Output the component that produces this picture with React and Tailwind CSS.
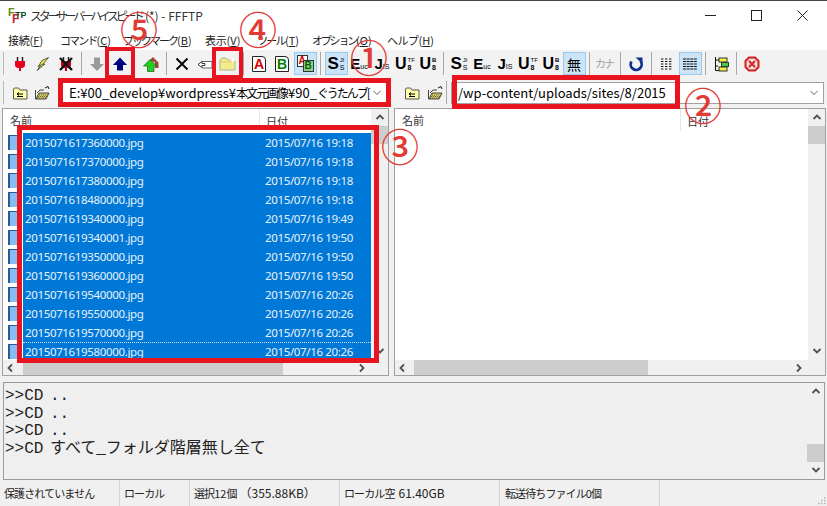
const UI = { fontFamily: '"Noto Sans CJK JP", "Noto Sans", sans-serif' };

const files = [
  ['2015071617360000.jpg', '2015/07/16 19:18'],
  ['2015071617370000.jpg', '2015/07/16 19:18'],
  ['2015071617380000.jpg', '2015/07/16 19:18'],
  ['2015071618480000.jpg', '2015/07/16 19:18'],
  ['2015071619340000.jpg', '2015/07/16 19:49'],
  ['2015071619340001.jpg', '2015/07/16 19:50'],
  ['2015071619350000.jpg', '2015/07/16 19:50'],
  ['2015071619360000.jpg', '2015/07/16 19:50'],
  ['2015071619540000.jpg', '2015/07/16 20:26'],
  ['2015071619550000.jpg', '2015/07/16 20:26'],
  ['2015071619570000.jpg', '2015/07/16 20:26'],
  ['2015071619580000.jpg', '2015/07/16 20:26'],
];

function Ico({ children }) {
  return <svg width="16" height="16" viewBox="0 0 16 16">{children}</svg>;
}

function Chevron({ dir = 'down', thin, className = '' }) {
  const d = {
    up: 'M1.5 6 L5 2.5 L8.5 6',
    down: 'M1.5 3 L5 6.5 L8.5 3',
    left: 'M6 1.5 L2.5 5 L6 8.5',
    right: 'M3 1.5 L6.5 5 L3 8.5',
  }[dir];
  return (
    <svg width="10" height="10" viewBox="0 0 10 10" className={className}>
      <path d={d} fill="none" stroke={thin ? '#606060' : '#505050'} strokeWidth={thin ? 1 : 1.8} />
    </svg>
  );
}

function Btn({ children, on }) {
  return (
    <div className={`w-[23px] h-[23px] shrink-0 flex items-center justify-center ${on ? 'bg-[#cce4f7] border border-[#99c9ef]' : ''}`}>
      {children}
    </div>
  );
}

function Sep() {
  return (
    <div className="w-[8px] h-[23px] shrink-0 flex justify-center">
      <div className="w-px h-full bg-[#a8a8a8]" />
    </div>
  );
}

function Code({ big, top, bottom, topBold, size = 16 }) {
  return (
    <div className="flex items-center text-black" style={{ fontFamily: '"Liberation Sans", sans-serif' }}>
      <span className="font-bold leading-none" style={{ fontSize: size }}>{big}</span>
      <div className="flex flex-col items-start leading-none ml-px">
        <span className={`text-[6px] leading-[7px] ${topBold ? 'font-bold' : ''}`}>{top}</span>
        <span className={`text-[7px] leading-[7px] ${bottom === '8' ? 'font-bold' : ''}`}>{bottom}</span>
      </div>
    </div>
  );
}

function Small({ big, sub }) {
  return (
    <div className="flex items-end text-black" style={{ fontFamily: '"Liberation Sans", sans-serif' }}>
      <span className="text-[15px] font-bold leading-none">{big}</span>
      <span className="text-[7px] leading-[9px]">{sub}</span>
    </div>
  );
}

function Letter({ c, color }) {
  return (
    <div className="w-[14px] h-[16px] border border-[#222] rounded-tr-[4px] flex items-center justify-center text-[14px] font-bold leading-none bg-white"
      style={{ color, fontFamily: '"Liberation Sans", sans-serif' }}>
      {c}
    </div>
  );
}

function FolderUp() {
  return (
    <Ico>
      <path d="M1.5 4 V14 H15 V5 H8 L6.5 3 H2.5 Z" fill="#ffffa8" stroke="#555" />
      <path d="M5 9 H11 M5 9 L7 7.5 M5 9 L7 10.5 M5 11.5 H11" fill="none" stroke="#000" strokeWidth="1" />
    </Ico>
  );
}

function FolderOpen() {
  return (
    <Ico>
      <path d="M1.5 5 V14 H12 L15 8 H5 L2 14" fill="#d8c860" stroke="#444" />
      <path d="M3 8 L6 5 H10" fill="#f4f0a0" stroke="#444" />
      <path d="M3 13 H12 M4 11.5 H13 M5 10 H13.5" stroke="#333" strokeWidth="0.7" strokeDasharray="1 1" />
      <path d="M11 3 L14 1.5 L15 4" fill="none" stroke="#111" />
    </Ico>
  );
}

function Toolbar() {
  return (
    <div className="h-[27px] shrink-0 flex items-center pl-[3px] bg-[#f2f2f2]">
      <div className="w-[5.5px] h-[23px] shrink-0 flex"><div className="w-px h-full bg-[#b8b8b8]" /></div>
      <Btn>
        <Ico>
          <path d="M5.5 1 V5 M10.5 1 V5" stroke="#222" strokeWidth="1.5" />
          <path d="M3 5 H13 V9 Q13 12 9 12 V15 H7 V12 Q3 12 3 9 Z" fill="#e8001c" />
        </Ico>
      </Btn>
      <Btn>
        <Ico>
          <path d="M13.5 1.5 L7 4.5 L3 11 L6.5 8.5 L2 14.5 L10 8 L7.5 8.5 Z" fill="#f7ec3c" stroke="#333" strokeWidth="0.8" />
        </Ico>
      </Btn>
      <Btn>
        <Ico>
          <path d="M5.5 1 V5 M10.5 1 V5" stroke="#222" strokeWidth="1.5" />
          <path d="M3 5 H13 V9 Q13 12 9 12 V15 H7 V12 Q3 12 3 9 Z" fill="#c4001c" />
          <path d="M2 2 L14 14 M14 2 L2 14" stroke="#111" strokeWidth="2.4" />
        </Ico>
      </Btn>
      <Sep />
      <Btn>
        <Ico><path d="M5 1.5 H11 V8 H15 L8 15 L1 8 H5 Z" fill="#9a9a9a" /></Ico>
      </Btn>
      <Btn>
        <Ico><path d="M8 1.5 L15 9 H11 V14.5 H5 V9 H1 Z" fill="#000080" /></Ico>
      </Btn>
      <div className="w-[8px] shrink-0" />
      <Btn>
        <Ico>
          <path d="M6 5 L10 1 L15.5 6.5 V12 H12 V6 Z" fill="#a8403c" />
          <path d="M7 3.5 L14 10 H11 V15.5 H4.5 V10 H0.5 Z" fill="#22cc22" stroke="#0a6a0a" strokeWidth="0.7" />
        </Ico>
      </Btn>
      <Sep />
      <Btn>
        <Ico><path d="M2.5 2.5 L13.5 13.5 M13.5 2.5 L2.5 13.5" stroke="#000" strokeWidth="1.9" /></Ico>
      </Btn>
      <Btn>
        <Ico>
          <path d="M5 5.5 H15 V12 H5" fill="#fff" stroke="#666" />
          <path d="M1 8.5 L5 5.5 V7.5 H8 V9.5 H5 V11.5 Z" fill="#fff" stroke="#111" strokeWidth="0.8" />
        </Ico>
      </Btn>
      <Btn>
        <svg width="18" height="16" viewBox="0 0 18 16">
          <path d="M1 4 L3 2 H7 L9 4 H16 V14 H1 Z" fill="#f3ec8e" stroke="#b0b088" />
          <path d="M2 6 H15" stroke="#d8cf60" />
          <path d="M14 0.5 L15 3 L17.5 4 L15 5 L14 7.5 L13 5 L10.5 4 L13 3 Z" fill="#fff" />
        </svg>
      </Btn>
      <Sep />
      <Btn><Letter c="A" color="#d80000" /></Btn>
      <Btn><Letter c="B" color="#008000" /></Btn>
      <Btn on>
        <div className="relative w-[17px] h-[17px]" style={{ fontFamily: '"Liberation Sans", sans-serif' }}>
          <div className="absolute left-0 top-0 w-[11px] h-[12px] bg-white border border-[#333] text-[10px] leading-[10px] font-bold text-center text-[#d80000]">A</div>
          <div className="absolute right-0 bottom-0 w-[11px] h-[12px] bg-[#8fd08f] border border-[#333] text-[10px] leading-[10px] font-bold text-center text-[#006000]">B</div>
        </div>
      </Btn>
      <Sep />
      <Btn on><Code big="S" top="JI" bottom="S" size={17} /></Btn>
      <Btn><Small big="E" sub="uc" /></Btn>
      <Btn><Small big="J" sub="IS" /></Btn>
      <Btn><Code big="U" top="TF" bottom="8" /></Btn>
      <Btn><Code big="U" top="B" bottom="8" topBold /></Btn>
      <Sep />
      <Btn><Code big="S" top="JI" bottom="S" size={17} /></Btn>
      <Btn><Small big="E" sub="uc" /></Btn>
      <Btn><Small big="J" sub="IS" /></Btn>
      <Btn><Code big="U" top="TF" bottom="8" /></Btn>
      <Btn><Code big="U" top="B" bottom="8" topBold /></Btn>
      <Btn on><span className="text-[14px] leading-none text-black">無</span></Btn>
      <Sep />
      <Btn><span className="text-[11px] leading-none text-[#a0a0a0] tracking-[-2px] pr-[2px]">カナ</span></Btn>
      <Sep />
      <Btn>
        <Ico>
          <path d="M3.5 5.5 A5.5 5.5 0 1 0 12.5 5" fill="none" stroke="#10308c" strokeWidth="2.8" />
          <path d="M7.5 1.5 H14.5 V7.5 Z" fill="#10308c" />
        </Ico>
      </Btn>
      <Sep />
      <Btn>
        <Ico><path d="M2 3 H14 M2 5.5 H14 M2 8 H14 M2 10.5 H14 M2 13 H14" stroke="#111" strokeWidth="1.2" strokeDasharray="2.4 1.6" /></Ico>
      </Btn>
      <Btn on>
        <Ico><path d="M1 3 H15 M1 5.5 H15 M1 8 H15 M1 10.5 H15 M1 13 H15" stroke="#111" strokeWidth="1.2" strokeDasharray="3 0.6" /></Ico>
      </Btn>
      <Sep />
      <Btn>
        <Ico>
          <path d="M2.5 1 V14.5 H8 M2.5 4 H6 M2.5 10 H5" fill="none" stroke="#111" />
          <rect x="6" y="2" width="8" height="4" fill="#f6f040" stroke="#333" />
          <rect x="8.5" y="6.5" width="7" height="4" fill="#40d040" stroke="#333" />
          <rect x="6" y="11" width="8" height="4" fill="#f6f040" stroke="#333" />
        </Ico>
      </Btn>
      <Sep />
      <Btn>
        <Ico>
          <path d="M5 1.5 H11 L14.5 5 V11 L11 14.5 H5 L1.5 11 V5 Z" fill="#f5d8d8" stroke="#d02020" strokeWidth="2" />
          <path d="M5 5 L11 11 M11 5 L5 11" stroke="#d02020" strokeWidth="1.8" />
        </Ico>
      </Btn>
    </div>
  );
}

function PathRow() {
  return (
    <div className="h-[31px] shrink-0 flex items-center bg-[#f2f2f2]">
      <div className="w-[387px] h-full flex items-center pl-[3px]">
        <div className="w-[9px] h-[23px] shrink-0"><div className="w-px h-full bg-[#b8b8b8]" /></div>
        <div className="w-[22px] shrink-0"><FolderUp /></div>
        <FolderOpen />
        <div className="w-[12px] shrink-0" />
        <Combo>
          E:¥00_develop¥wordpress¥<span className="text-[12px] tracking-[-1.8px]">本文元画像</span><span className="pl-[1px]">¥90_</span><span className="text-[12px] tracking-[-2px]">ぐうたんブ[</span>
        </Combo>
      </div>
      <div className="w-[6px] h-[23px] shrink-0 flex justify-center"><div className="w-px h-full bg-[#a8a8a8]" /></div>
      <div className="flex-1 h-full flex items-center pl-[11px] pr-[3px]">
        <div className="w-[23px] shrink-0"><FolderUp /></div>
        <FolderOpen />
        <div className="w-[5px] h-[23px] ml-[3px] shrink-0"><div className="w-px h-full bg-[#a8a8a8]" /></div>
        <Combo>/wp-content/uploads/sites/8/2015</Combo>
      </div>
    </div>
  );
}

function Combo({ children }) {
  return (
    <div className="flex-1 h-[22px] min-w-0 bg-white border border-[#a0a0a0] flex items-center pl-[6px] pr-[4px]">
      <span className="flex-1 min-w-0 overflow-hidden whitespace-nowrap text-[13px] text-black leading-[20px]">{children}</span>
      <Chevron thin className="shrink-0" />
    </div>
  );
}

function VScroll({ thumbTop, thumbH }) {
  return (
    <div className="relative w-[17px] shrink-0 h-full bg-[#f0f0f0] flex flex-col items-center justify-between py-[4px]">
      <Chevron dir="up" />
      <div className="absolute left-0 right-0 bg-[#cdcdcd]" style={{ top: thumbTop, height: thumbH }} />
      <Chevron />
    </div>
  );
}

function HScroll({ pre, thumb }) {
  return (
    <div className="h-[15px] shrink-0 bg-[#f0f0f0] flex items-center">
      <div className="w-[16px] shrink-0 flex justify-center"><Chevron dir="left" /></div>
      <div className="h-full bg-[#cdcdcd]" style={{ marginLeft: pre, width: thumb }} />
      <div className="flex-1" />
      <div className="w-[31px] shrink-0"><Chevron dir="right" /></div>
    </div>
  );
}

function Header({ split }) {
  return (
    <div className="h-[22px] shrink-0 flex items-center bg-white text-[11px] text-[#333]">
      <div className="h-full border-r border-[#e5e5e5] pl-[7px] pt-[3px]" style={{ width: split }}>名前</div>
      <div className="pl-[6px] pt-[3px] flex-1">日付</div>
    </div>
  );
}

function LeftPane() {
  return (
    <div className="w-[387px] h-full border border-[#a0a0a0] flex flex-col">
      <div className="flex-1 min-h-0 flex">
        <div className="flex-1 min-w-0 flex flex-col bg-white">
          <Header split={257} />
          <div className="flex-1 min-h-0 overflow-hidden pt-[2px]">
            {files.map(([name, date], i) => (
              <div key={name} className="h-[19px] flex items-center">
                <div className="w-[20px] shrink-0 pl-[5px] h-[15px]">
                  <div className="w-[13px] h-[15px] bg-[#87bdf0] border-l-2 border-t border-[#2a5a95]" />
                </div>
                <div className={`flex-1 h-full flex items-center bg-[#0078d7] text-[#e8f2fb] text-[11.5px] tracking-[-0.35px] ${i === 11 ? 'border-t border-dotted border-[#d0e4f5]' : ''}`}
                  style={{ fontFamily: '"Noto Sans", sans-serif' }}>
                  <span className="w-[242px] pl-[2px] shrink-0">{name}</span>
                  <span>{date}</span>
                </div>
              </div>
            ))}
          </div>
        </div>
        <VScroll thumbTop={17} thumbH={18} />
      </div>
      <HScroll pre={4} thumb={260} />
    </div>
  );
}

function RightPane() {
  return (
    <div className="flex-1 h-full border border-[#a0a0a0] flex flex-col">
      <div className="flex-1 min-h-0 flex">
        <div className="flex-1 min-w-0 flex flex-col bg-white">
          <Header split={286} />
        </div>
        <VScroll thumbTop={17} thumbH={18} />
      </div>
      <HScroll pre={3} thumb={234} />
    </div>
  );
}

function Log() {
  return (
    <div className="h-[98px] shrink-0 mx-[3px] mr-[2px] border border-[#9a9a9a] bg-[#efefef] flex">
      <div className="flex-1 min-w-0 pt-[5px] pl-[1px] text-[16px] leading-[17.5px] text-[#222]"
        style={{ fontFamily: '"Liberation Mono", "Noto Sans CJK JP", monospace' }}>
        <div>&gt;&gt;CD<span className="ml-[-3px]"> ..</span></div>
        <div>&gt;&gt;CD<span className="ml-[-3px]"> ..</span></div>
        <div>&gt;&gt;CD<span className="ml-[-3px]"> ..</span></div>
        <div>&gt;&gt;CD<span className="ml-[-3px]"> すべて_フォルダ階層無し全て</span></div>
      </div>
      <VScroll thumbTop={61} thumbH={18} />
    </div>
  );
}

function StatusCell({ w, children }) {
  return (
    <div className="h-full shrink-0 border-r border-[#d5d5d5] pl-[4px] flex items-center whitespace-nowrap" style={{ width: w }}>
      {children}
    </div>
  );
}

function Status() {
  return (
    <div className="relative flex-1 flex items-center bg-[#f0f0f0] text-[11px] tracking-[-0.9px] text-[#222]">
      <StatusCell w={120}>保護されていません</StatusCell>
      <StatusCell w={70}>ローカル</StatusCell>
      <StatusCell w={150}>
        選択<span className="tracking-normal">12</span>個<span className="ml-[3px] text-[12px] tracking-normal">（355.88KB）</span>
      </StatusCell>
      <StatusCell w={160}>
        ローカル空<span className="ml-[4px] text-[12px] tracking-normal">61.40GB</span>
      </StatusCell>
      <StatusCell w={160}><span className="pl-[1px]">転送待ちファイル0個</span></StatusCell>
      <svg width="8" height="8" viewBox="0 0 8 8" className="absolute right-[1px] bottom-[1px]">
        <path d="M6 0.5 H7.5 M3 3.5 H4.5 M6 3.5 H7.5 M0 6.5 H1.5 M3 6.5 H4.5 M6 6.5 H7.5" stroke="#b0b0b0" strokeWidth="1.5" />
      </svg>
    </div>
  );
}

function Menu() {
  const items = [
    ['接続', 'F', 'w-[52px]', 'tracking-[-0.2px]'],
    ['コマンド', 'C', 'w-[63px]', 'tracking-[-1.9px]'],
    ['ブックマーク', 'B', 'w-[82px]', 'tracking-[-2px]'],
    ['表示', 'V', 'w-[52px]', 'tracking-[-0.2px]'],
    ['ツール', 'T', 'w-[55px]', 'tracking-[-1.7px]'],
    ['オプション', 'O', 'w-[75px]', 'tracking-[-2.2px]'],
    ['ヘルプ', 'H', 'w-[60px]', 'tracking-[-0.5px]'],
  ];
  return (
    <div className="h-[20px] shrink-0 bg-white flex items-center pl-[8px] text-[11px] text-[#222]">
      {items.map(([label, key, w, t]) => (
        <div key={key} className={`${w} shrink-0 whitespace-nowrap`}>
          <span className={t}>{label}</span>(<span className="underline">{key}</span>)
        </div>
      ))}
    </div>
  );
}

function Title() {
  return (
    <div className="h-[30px] shrink-0 bg-white flex items-center border-t border-[#444]">
      <div className="pl-[8px] w-[30px] shrink-0">
        <svg width="18" height="16" viewBox="0 0 18 16" style={{ fontFamily: '"Liberation Sans", sans-serif', fontWeight: 700 }}>
          <text x="0" y="8" fontSize="11" fill="#6a8a10">F</text>
          <text x="4" y="15" fontSize="12" fill="#c02830">F</text>
          <text x="7" y="10" fontSize="9" fill="#0a4a2a">TP</text>
        </svg>
      </div>
      <span className="flex-1 text-[12px] text-[#333] whitespace-nowrap">
        <span className="tracking-[-3.3px]">スターサーバーハイスピード</span><span className="pl-[3px]">(*) - FFFTP</span>
      </span>
      <div className="flex items-center gap-[35px] pr-[19px]">
        <svg width="11" height="11" viewBox="0 0 11 11"><path d="M0 5.5 H11" stroke="#222" /></svg>
        <svg width="11" height="11" viewBox="0 0 11 11"><rect x="0.5" y="0.5" width="10" height="10" fill="none" stroke="#222" /></svg>
        <svg width="11" height="11" viewBox="0 0 11 11"><path d="M0.5 0.5 L10.5 10.5 M10.5 0.5 L0.5 10.5" stroke="#222" /></svg>
      </div>
    </div>
  );
}

function Mark({ className }) {
  return <div className={`absolute border-[#e8141f] ${className}`} />;
}

function Num({ children, className }) {
  return (
    <span className={`absolute text-[38px] font-medium leading-none text-[#e23a35] ${className}`} style={{ fontFamily: '"Noto Sans CJK JP", sans-serif' }}>
      {children}
    </span>
  );
}

export default function App() {
  return (
    <div className="relative w-[827px] h-[506px] overflow-hidden bg-[#f0f0f0] flex flex-col" style={UI}>
      <Title />
      <Menu />
      <Toolbar />
      <PathRow />
      <div className="h-[268px] shrink-0 flex gap-[5px] pl-[2px] pr-[1px]">
        <LeftPane />
        <RightPane />
      </div>
      <div className="h-[6px] shrink-0" />
      <Log />
      <Status />

      <Mark className="left-[105px] top-[47px] w-[30px] h-[32px] border-[4px]" />
      <Mark className="left-[212px] top-[47px] w-[31px] h-[32px] border-[4px]" />
      <Mark className="left-[58px] top-[78px] w-[333px] h-[29px] border-[5px]" />
      <Mark className="left-[452px] top-[75px] w-[228px] h-[34px] border-[5px]" />
      <Mark className="left-[17px] top-[125px] w-[362px] h-[238px] border-[5px]" />
      <Num className="left-[350px] top-[37px]">①</Num>
      <Num className="left-[684px] top-[85px]">②</Num>
      <Num className="left-[381px] top-[126px]">③</Num>
      <Num className="left-[239px] top-[9px]">④</Num>
      <Num className="left-[120px] top-[9px]">⑤</Num>
    </div>
  );
}
